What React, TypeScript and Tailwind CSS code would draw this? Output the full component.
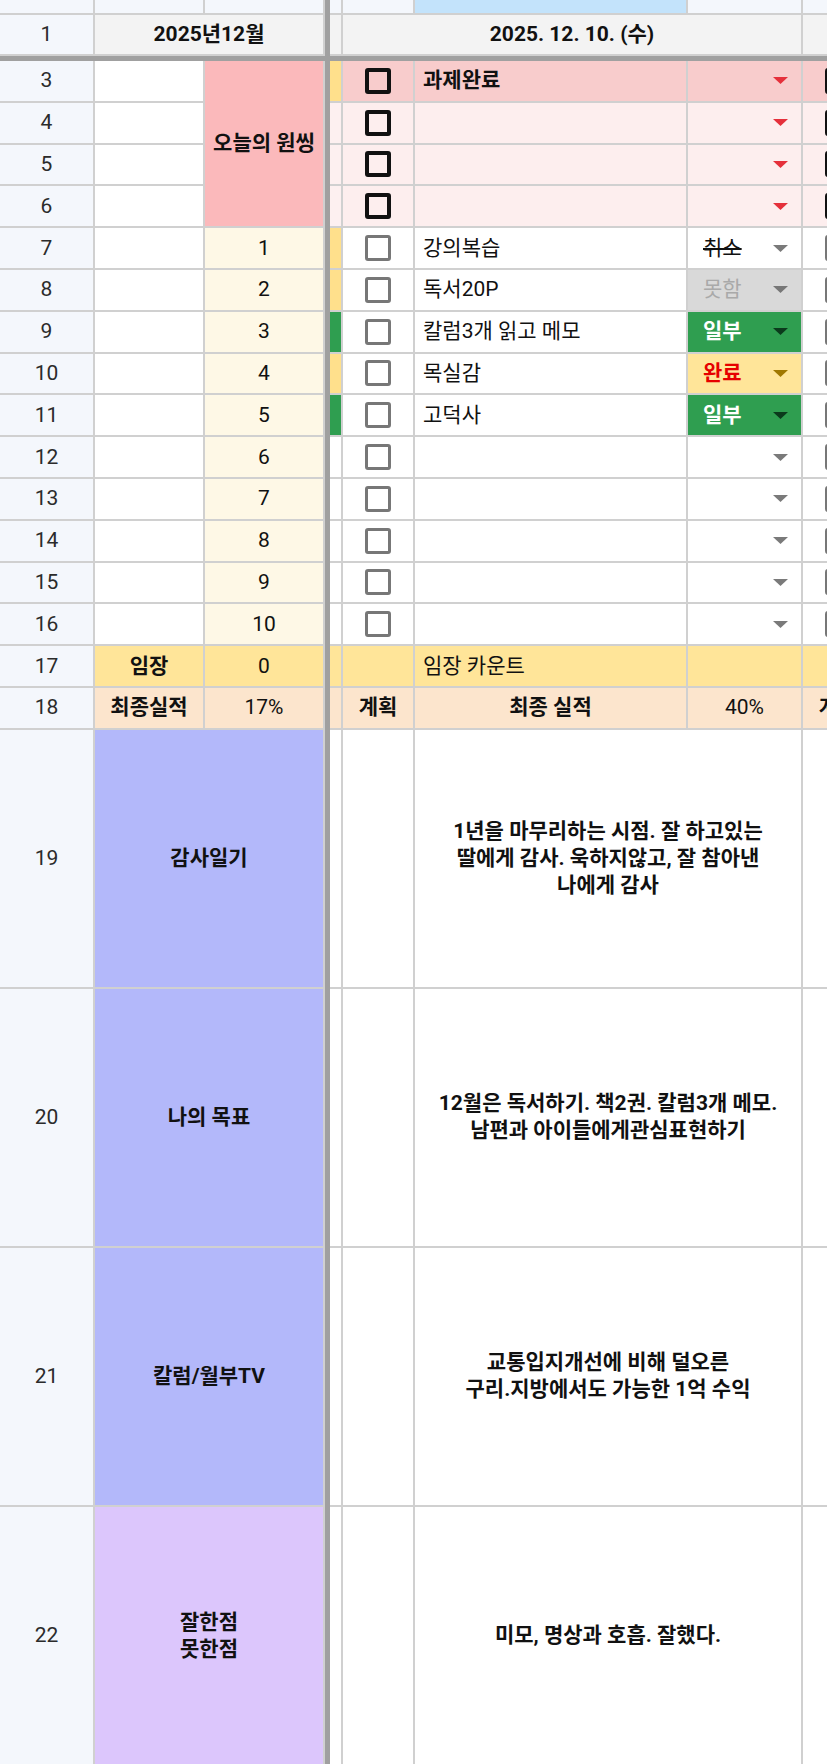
import React from 'react';

const base = "border-r-2 border-b-2 border-[#d0d0d0] flex items-center overflow-hidden min-w-0";

function Cell({ cls = '', children }: { cls?: string; children?: React.ReactNode }) {
  return <div className={`${base} ${cls}`}>{children}</div>;
}

function RowNum({ n }: { n: number | string }) {
  return <Cell cls="justify-center bg-[#f4f7fc] text-[#2b2b2b]">{n}</Cell>;
}

function Box({ dark }: { dark?: boolean }) {
  return dark ? (
    <div className="w-[26px] h-[26px] rounded-[3px] border-[4px] border-[#111] shrink-0" />
  ) : (
    <div className="w-[26px] h-[26px] rounded-[3px] border-[3px] border-[#777] shrink-0" />
  );
}

function Arrow({ color }: { color: string }) {
  return (
    <svg width="15" height="7" viewBox="0 0 15 7" className="shrink-0">
      <path d="M0 0H15L7.5 7Z" fill={color} />
    </svg>
  );
}

type Status = 'cancel' | 'fail' | 'part' | 'done' | 'none';

function StatusCell({ s }: { s: Status }) {
  if (s === 'cancel')
    return (
      <Cell cls="justify-between pl-[15px] pr-[13px] bg-white">
        <span className="line-through text-[#111]">취소</span>
        <Arrow color="#7a7a7a" />
      </Cell>
    );
  if (s === 'fail')
    return (
      <Cell cls="justify-between pl-[15px] pr-[13px] bg-[#d9d9d9]">
        <span className="text-[#a9a9a9]">못함</span>
        <Arrow color="#777777" />
      </Cell>
    );
  if (s === 'part')
    return (
      <Cell cls="justify-between pl-[15px] pr-[13px] bg-[#2f9e50]">
        <span className="text-white font-bold">일부</span>
        <Arrow color="#0b3a1c" />
      </Cell>
    );
  if (s === 'done')
    return (
      <Cell cls="justify-between pl-[15px] pr-[13px] bg-[#ffe599]">
        <span className="text-[#e60000] font-bold">완료</span>
        <Arrow color="#a07800" />
      </Cell>
    );
  return (
    <Cell cls="justify-end pr-[13px] bg-white">
      <Arrow color="#7a7a7a" />
    </Cell>
  );
}

const tasks: { n: number; num: number; strip: string; text: string; s: Status }[] = [
  { n: 7, num: 1, strip: 'bg-[#ffe08c]', text: '강의복습', s: 'cancel' },
  { n: 8, num: 2, strip: 'bg-[#ffe08c]', text: '독서20P', s: 'fail' },
  { n: 9, num: 3, strip: 'bg-[#2f9e50]', text: '칼럼3개 읽고 메모', s: 'part' },
  { n: 10, num: 4, strip: 'bg-[#ffe08c]', text: '목실감', s: 'done' },
  { n: 11, num: 5, strip: 'bg-[#2f9e50]', text: '고덕사', s: 'part' },
  { n: 12, num: 6, strip: 'bg-white', text: '', s: 'none' },
  { n: 13, num: 7, strip: 'bg-white', text: '', s: 'none' },
  { n: 14, num: 8, strip: 'bg-white', text: '', s: 'none' },
  { n: 15, num: 9, strip: 'bg-white', text: '', s: 'none' },
  { n: 16, num: 10, strip: 'bg-white', text: '', s: 'none' },
];

const journal: { n: number; label: string[]; bg: string; text: string[] }[] = [
  {
    n: 19,
    label: ['감사일기'],
    bg: 'bg-[#b3b8fa]',
    text: ['1년을 마무리하는 시점. 잘 하고있는', '딸에게 감사. 욱하지않고, 잘 참아낸', '나에게 감사'],
  },
  {
    n: 20,
    label: ['나의 목표'],
    bg: 'bg-[#b3b8fa]',
    text: ['12월은 독서하기. 책2권. 칼럼3개 메모.', '남편과 아이들에게관심표현하기'],
  },
  {
    n: 21,
    label: ['칼럼/월부TV'],
    bg: 'bg-[#b3b8fa]',
    text: ['교통입지개선에 비해 덜오른', '구리.지방에서도 가능한 1억 수익'],
  },
  {
    n: 22,
    label: ['잘한점', '못한점'],
    bg: 'bg-[#dcc6fc]',
    text: ['미모, 명상과 호흡. 잘했다.'],
  },
];

export default function App() {
  return (
    <div className="w-[827px] h-[1764px] overflow-hidden bg-white text-[21px] leading-none text-[#111] font-['Roboto','Noto_Sans_CJK_KR',sans-serif]">
      <div className="grid w-[875px] grid-cols-[95px_110px_120px_5px_13px_72px_273px_115px_72px] grid-rows-[15px_41px_5px_41.8px_41.8px_41.8px_41.8px_41.8px_41.8px_41.8px_41.8px_41.8px_41.8px_41.8px_41.8px_41.8px_41.8px_41.8px_41.8px_259px_259px_259px_260px]">
        {/* frozen separators */}
        <div className="col-start-4 row-[1/-1] bg-[#a0a0a0]" />
        <div className="col-[1/-1] row-start-3 bg-[#a0a0a0]" />

        {/* column header strip */}
        <Cell cls="bg-[#f4f7fc]" />
        <Cell cls="bg-[#f4f7fc]" />
        <Cell cls="bg-[#f4f7fc] border-r-0" />
        <Cell cls="bg-[#f4f7fc]" />
        <Cell cls="bg-[#f4f7fc]" />
        <Cell cls="bg-[#c3e3fb]" />
        <Cell cls="bg-[#f4f7fc]" />
        <Cell cls="bg-[#f4f7fc]" />

        {/* row 1 */}
        <Cell cls="justify-center bg-[#f4f7fc] text-[#2b2b2b] border-b-0">1</Cell>
        <Cell cls="col-span-2 justify-center bg-[#f3f3f3] font-bold border-b-0 border-r-0">2025년12월</Cell>
        <Cell cls="bg-[#f3f3f3] border-b-0" />
        <Cell cls="col-span-3 justify-center bg-[#f3f3f3] font-bold border-b-0">2025. 12. 10. (수)</Cell>
        <Cell cls="bg-[#f3f3f3] border-b-0" />

        {/* rows 3-6 */}
        {[3, 4, 5, 6].map((n) => {
          const first = n === 3;
          return (
            <React.Fragment key={n}>
              <RowNum n={n} />
              <Cell cls="bg-white" />
              {first && (
                <Cell cls="row-span-4 justify-center bg-[#fbb9bb] font-bold border-r-0">오늘의 원씽</Cell>
              )}
              <Cell cls={first ? 'bg-[#ffe08c]' : 'bg-[#fdf0f0]'} />
              <Cell cls={`justify-center ${first ? 'bg-[#f8cccc]' : 'bg-[#fdeeee]'}`}>
                <Box dark />
              </Cell>
              <Cell cls={`pl-[8px] font-bold ${first ? 'bg-[#f8cccc]' : 'bg-[#fdeeee]'}`}>
                {first ? '과제완료' : ''}
              </Cell>
              <Cell cls={`justify-end pr-[13px] ${first ? 'bg-[#f8cccc]' : 'bg-[#fdeeee]'}`}>
                <Arrow color="#e5303b" />
              </Cell>
              <Cell cls={`justify-center ${first ? 'bg-[#f8cccc]' : 'bg-[#fdeeee]'}`}>
                <Box dark />
              </Cell>
            </React.Fragment>
          );
        })}

        {/* rows 7-16 */}
        {tasks.map((t) => (
          <React.Fragment key={t.n}>
            <RowNum n={t.n} />
            <Cell cls="bg-white" />
            <Cell cls="justify-center bg-[#fef8e6] border-r-0">{t.num}</Cell>
            <Cell cls={t.strip} />
            <Cell cls="justify-center bg-white">
              <Box />
            </Cell>
            <Cell cls="pl-[8px] bg-white whitespace-nowrap">{t.text}</Cell>
            <StatusCell s={t.s} />
            <Cell cls="justify-center bg-white">
              <Box />
            </Cell>
          </React.Fragment>
        ))}

        {/* row 17 */}
        <RowNum n={17} />
        <Cell cls="justify-center bg-[#ffe599] font-bold">임장</Cell>
        <Cell cls="justify-center bg-[#ffe599] border-r-0">0</Cell>
        <Cell cls="bg-[#ffe599]" />
        <Cell cls="bg-[#ffe599]" />
        <Cell cls="pl-[8px] bg-[#ffe599]">임장 카운트</Cell>
        <Cell cls="bg-[#ffe599]" />
        <Cell cls="bg-[#ffe599]" />

        {/* row 18 */}
        <RowNum n={18} />
        <Cell cls="justify-center bg-[#fce5cd] font-bold">최종실적</Cell>
        <Cell cls="justify-center bg-[#fce5cd] border-r-0">17%</Cell>
        <Cell cls="bg-[#fce5cd]" />
        <Cell cls="justify-center bg-[#fce5cd] font-bold">계획</Cell>
        <Cell cls="justify-center bg-[#fce5cd] font-bold">최종 실적</Cell>
        <Cell cls="justify-center bg-[#fce5cd]">40%</Cell>
        <Cell cls="justify-center bg-[#fce5cd] font-bold">계획</Cell>

        {/* rows 19-22 */}
        {journal.map((j) => (
          <React.Fragment key={j.n}>
            <RowNum n={j.n} />
            <Cell cls={`col-span-2 justify-center text-center font-bold leading-[27px] border-r-0 ${j.bg}`}>
              <div>
                {j.label.map((l, i) => (
                  <div key={i} className="whitespace-nowrap">
                    {l}
                  </div>
                ))}
              </div>
            </Cell>
            <Cell cls="bg-white" />
            <Cell cls="bg-white" />
            <Cell cls="col-span-2 justify-center text-center font-bold leading-[27px] bg-white">
              <div>
                {j.text.map((l, i) => (
                  <div key={i} className="whitespace-nowrap">
                    {l}
                  </div>
                ))}
              </div>
            </Cell>
            <Cell cls="bg-white" />
          </React.Fragment>
        ))}
      </div>
    </div>
  );
}
